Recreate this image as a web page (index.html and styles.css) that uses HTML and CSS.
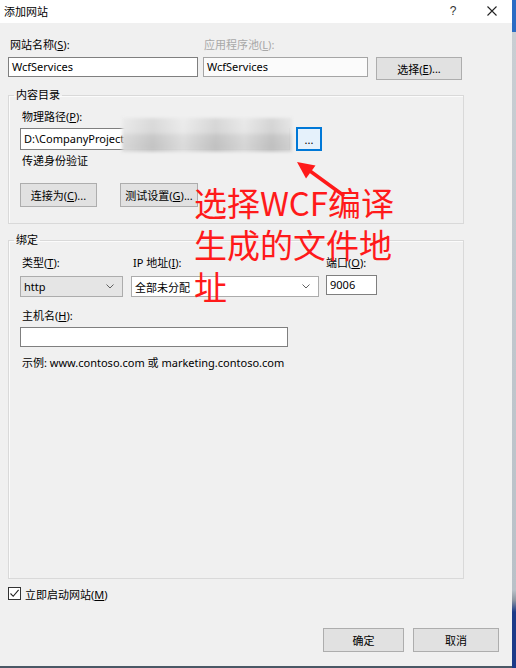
FILE: index.html
```html
<!DOCTYPE html>
<html lang="zh-CN">
<head>
<meta charset="utf-8">
<title>添加网站</title>
<link rel="stylesheet" href="styles.css">
</head>
<body>
<div class="screen">
  <div class="dialog">
    <div class="titlebar">
      <span class="title">添加网站</span>
      <span class="help">?</span>
      <span class="close"><svg width="10" height="10" viewBox="0 0 10 10"><path d="M0.5 0.5 L9.5 9.5 M9.5 0.5 L0.5 9.5" stroke="#222" stroke-width="1.1" fill="none"/></svg></span>
    </div>
    <div class="body">
      <div class="row-site">
        <div class="field f-name">
          <div class="lbl">网站名称(<u>S</u>):</div>
          <div class="input">WcfServices</div>
        </div>
        <div class="field f-pool">
          <div class="lbl disabled">应用程序池(<u>L</u>):</div>
          <div class="input readonly">WcfServices</div>
        </div>
        <div class="btn btn-select">选择(<u>E</u>)...</div>
      </div>

      <fieldset class="group g-content">
        <legend>内容目录</legend>
        <div class="lbl">物理路径(<u>P</u>):</div>
        <div class="path-row">
          <div class="input path">D:\CompanyProject<div class="redact"></div></div>
          <div class="btn btn-browse">...</div>
        </div>
        <div class="lbl lbl-auth">传递身份验证</div>
        <div class="btn-row">
          <div class="btn btn-connect">连接为(<u>C</u>)...</div>
          <div class="btn btn-test">测试设置(<u>G</u>)...</div>
        </div>
      </fieldset>

      <fieldset class="group g-binding">
        <legend>绑定</legend>
        <div class="bind-row">
          <div class="col c-type">
            <div class="lbl">类型(<u>T</u>):</div>
            <div class="select grey"><span>http</span><svg width="8" height="5" viewBox="0 0 8 5"><path d="M0.5 0.5 L4 4 L7.5 0.5" stroke="#606060" fill="none"/></svg></div>
          </div>
          <div class="col c-ip">
            <div class="lbl">IP 地址(<u>I</u>):</div>
            <div class="select"><span>全部未分配</span><svg width="8" height="5" viewBox="0 0 8 5"><path d="M0.5 0.5 L4 4 L7.5 0.5" stroke="#606060" fill="none"/></svg></div>
          </div>
          <div class="col c-port">
            <div class="lbl lbl-port">端口(<u>O</u>):</div>
            <div class="input port">9006</div>
          </div>
        </div>
        <div class="lbl lbl-host">主机名(<u>H</u>):</div>
        <div class="input host"></div>
        <div class="lbl lbl-example">示例: www.contoso.com 或 marketing.contoso.com</div>
      </fieldset>

      <div class="check-row">
        <span class="checkbox"><svg width="11" height="11" viewBox="0 0 11 11"><path d="M1.5 5.5 L4.2 8.3 L9.6 1.8" stroke="#222" stroke-width="1.1" fill="none"/></svg></span>
        <span>立即启动网站(<u>M</u>)</span>
      </div>

      <div class="footer">
        <div class="btn btn-ok">确定</div>
        <div class="btn btn-cancel">取消</div>
      </div>
    </div>

    <div class="note">选择WCF编译<br>生成的文件地<br>址</div>
    <svg class="arrow" width="60" height="45" viewBox="0 0 60 45">
      <path d="M20 16 L53 40" stroke="#ff1a1a" stroke-width="3.5" stroke-linecap="round"/>
      <polygon points="7,7 25.5,10.5 16,23.5" fill="#ff1a1a"/>
    </svg>
  </div>
  <div class="strip"></div>
</div>
</body>
</html>
```

FILE: styles.css
```css
* { box-sizing: border-box; }

body {
  margin: 0;
  font-family: "Segoe UI", "Noto Sans", "Noto Sans CJK SC", sans-serif;
  font-size: 11px;
  color: #000;
  background: #f0f0f0;
}

.screen {
  display: flex;
  width: 516px;
  height: 668px;
  overflow: hidden;
}

.dialog {
  position: relative;
  width: 512px;
  height: 668px;
  background: #f0f0f0;
  display: flex;
  flex-direction: column;
  border-bottom: 2px solid #4a5866;
}

.strip {
  width: 4px;
  height: 668px;
  background: linear-gradient(#2b6cc4 0, #2b6cc4 32px, #c9ced3 32px, #b9c1c8 590px, #8d97a2 600px, #1c3a88 612px, #1c3a88 100%);
}

.titlebar {
  height: 23px;
  background: #fff;
  display: flex;
  align-items: center;
  padding: 0 0 2px 4px;
}

.title { flex: 1; }

.help {
  width: 10px;
  text-align: center;
  font-family: "Liberation Sans", sans-serif;
  font-size: 12px;
  color: #333;
  margin-right: 29px;
}

.close {
  width: 10px;
  height: 10px;
  margin-right: 15px;
  display: flex;
}

.body {
  flex: 1;
  display: flex;
  flex-direction: column;
  padding: 14px 13px 14px 8px;
}

.lbl {
  height: 16px;
  line-height: 16px;
  padding-left: 2px;
  white-space: nowrap;
}

.lbl.disabled { color: #a8a8a8; padding-left: 1px; }

.input {
  height: 20px;
  margin-top: 4px;
  border: 1px solid #7f7f7f;
  background: #fff;
  padding: 0 3px;
  line-height: 18px;
  white-space: nowrap;
  overflow: hidden;
}

.input.readonly { background: #fbfbfb; border-color: #a5a5a5; }

.btn {
  display: flex;
  align-items: center;
  justify-content: center;
  height: 24px;
  background: #e1e1e1;
  border: 1px solid #adadad;
  white-space: nowrap;
}

/* top row */
.row-site {
  display: flex;
  align-items: flex-start;
}

.f-name { width: 190px; margin-right: 5px; }
.f-pool { width: 165px; margin-right: 8px; }

.btn-select {
  width: 86px;
  height: 23px;
  margin-top: 20px;
}

/* group boxes */
.group {
  margin: 7px 0 0;
  width: 456px;
  min-width: 0;
  padding: 6px 11px 16px;
  border: 1px solid #d9d9d9;
  box-shadow: inset 1px 1px 0 #fbfbfb;
}

.group legend {
  height: 16px;
  line-height: 16px;
  padding: 0 2px;
  margin-left: -6px;
}

.path-row {
  display: flex;
  align-items: center;
  margin-top: 2px;
}

.input.path {
  position: relative;
  width: 270px;
  height: 22px;
  margin-top: 0;
  line-height: 20px;
  overflow: visible;
}

.redact {
  position: absolute;
  left: 101px;
  top: -11px;
  width: 170px;
  height: 34px;
  background:
    linear-gradient(90deg, rgba(255,255,255,0.25) 0, rgba(0,0,0,0.04) 18%, rgba(255,255,255,0.3) 36%, rgba(0,0,0,0.05) 55%, rgba(255,255,255,0.2) 72%, rgba(0,0,0,0.06) 88%, rgba(255,255,255,0.1) 100%),
    linear-gradient(#e4e4e4 0, #e0e0e0 14px, #d0d0d0 18px, #cacaca 30px, #d6d6d6 34px);
  filter: blur(1.5px);
}

.btn-browse {
  width: 26px;
  height: 24px;
  margin-left: 6px;
  background: #e5f1fb;
  border: 1px solid #0078d7;
  box-shadow: inset 0 0 0 1px #0078d7;
  align-items: flex-end;
  padding-bottom: 4px;
  line-height: 12px;
}

.lbl-auth { margin-top: 2px; }

.btn-row {
  display: flex;
  margin-top: 14px;
}

.btn-connect { width: 77px; }
.btn-test { width: 78px; margin-left: 23px; }

.g-binding {
  flex: 1;
  margin-top: 8px;
  padding-top: 7px;
}

.bind-row { display: flex; }

.c-type { width: 103px; margin-right: 8px; }
.c-ip { width: 188px; margin-right: 7px; }
.c-port { width: 51px; }
.lbl-port { padding-left: 0; }

.select {
  height: 21px;
  margin-top: 5px;
  border: 1px solid #acacac;
  background: #fff;
  display: flex;
  align-items: center;
  justify-content: space-between;
  padding: 0 8px 0 3px;
}

.select.grey { background: #e5e5e5; }

.input.port { margin-top: 4px; }

.lbl-host { margin-top: 11px; }

.input.host {
  width: 268px;
  margin-top: 3px;
}

.lbl-example { margin-top: 8px; }

.check-row {
  display: flex;
  align-items: center;
  height: 13px;
  margin-top: 8px;
  gap: 4px;
}

.checkbox {
  width: 13px;
  height: 13px;
  border: 1px solid #333;
  background: #fff;
  display: flex;
  align-items: center;
  justify-content: center;
}

.footer {
  display: flex;
  justify-content: flex-end;
  gap: 9px;
  margin-top: 28px;
}

.btn-ok { width: 81px; }
.btn-cancel { width: 86px; }

.note {
  position: absolute;
  left: 194px;
  top: 181px;
  font-family: "Noto Sans CJK SC", "Noto Sans", sans-serif;
  font-size: 33px;
  line-height: 42px;
  color: #ff1a1a;
  white-space: nowrap;
}

.arrow {
  position: absolute;
  left: 290px;
  top: 155px;
}
```
